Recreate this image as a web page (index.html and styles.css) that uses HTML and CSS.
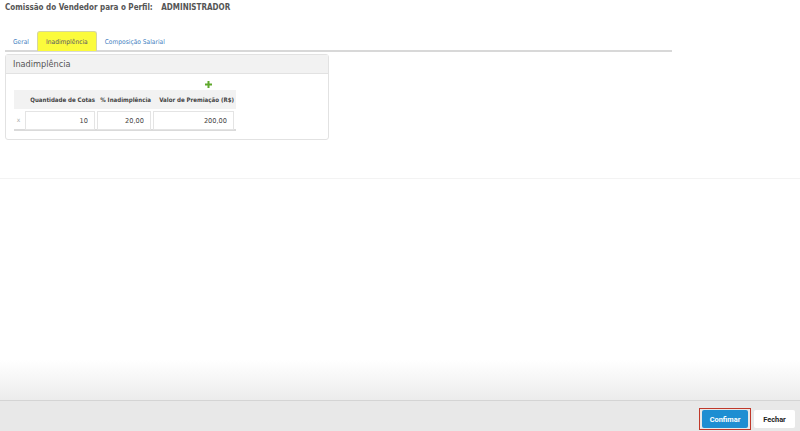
FILE: index.html
```html
<!DOCTYPE html>
<html lang="pt-BR">

<head>
    <meta charset="UTF-8">
    <meta name="viewport" content="width=device-width, initial-scale=1.0">
    <title>Comissão do Vendedor</title>
    <link rel="stylesheet" href="styles.css">
</head>

<body>
    <div class="page">
        <div class="content">
            <h1 class="title">Comissão do Vendedor para o Perfil: <span class="perfil">ADMINISTRADOR</span></h1>

            <!-- abas -->
            <div class="tabs">
                <a class="tab">Geral</a>
                <a class="tab active">Inadimplência</a>
                <a class="tab">Composição Salarial</a>
            </div>

            <!-- painel -->
            <div class="panel">
                <div class="panel-header">Inadimplência</div>
                <div class="panel-body">
                    <div class="grid">
                        <div class="add-row">
                            <svg class="plus" width="7" height="7" viewBox="0 0 7 7">
                                <path d="M2.5 0h2v2.5H7v2H4.5V7h-2V4.5H0v-2h2.5z" fill="#5fa82c" />
                            </svg>
                        </div>
                        <div class="grid-head">
                            <span class="cell remove-col"></span>
                            <span class="cell col-qtd">Quantidade de Cotas</span>
                            <span class="cell col-pct">% Inadimplência</span>
                            <span class="cell col-val">Valor de Premiação (R$)</span>
                        </div>
                        <div class="grid-row">
                            <span class="cell remove-col remove">x</span>
                            <span class="cell col-qtd"><input class="field" value="10"></span>
                            <span class="cell col-pct"><input class="field" value="20,00"></span>
                            <span class="cell col-val"><input class="field" value="200,00"></span>
                        </div>
                    </div>
                </div>
            </div>
        </div>

        <div class="spacer"></div>

        <!-- rodapé -->
        <div class="footer">
            <span class="btn-outline"><button class="btn btn-primary">Confimar</button></span>
            <button class="btn btn-default">Fechar</button>
        </div>
    </div>
</body>

</html>
```

FILE: styles.css
```css
body {
    margin: 0;
    font-family: "DejaVu Sans", Verdana, sans-serif;
    background: #fff;
    color: #444;
}

.page {
    height: 431px;
    display: flex;
    flex-direction: column;
}

.content {
    padding: 0 128px 0 5px;
    height: 178px;
    border-bottom: 1px solid #f3f3f3;
}

.title {
    margin: 0;
    padding-top: 3px;
    font-family: "DejaVu Sans Condensed", "DejaVu Sans", sans-serif;
    font-size: 8px;
    font-weight: bold;
    color: #555;
    height: 28px;
    white-space: nowrap;
}

.perfil {
    margin-left: 6px;
}

/* abas */
.tabs {
    display: flex;
    border-bottom: 2px solid #d8d8d8;
    height: 19px;
}

.tab {
    font-family: "DejaVu Sans Condensed", "DejaVu Sans", sans-serif;
    font-size: 6.6px;
    color: #3f7fbf;
    padding: 7px 8px 0;
    height: 12px;
    cursor: pointer;
    white-space: nowrap;
}

.tab.active {
    background: #fbfb3c;
    border: 1px solid #d6d6a0;
    border-bottom: none;
    border-radius: 3px 3px 0 0;
    color: #556;
    padding: 6px 8px 0;
    height: 13px;
}

/* painel */
.panel {
    margin-top: 2px;
    width: 322px;
    border: 1px solid #e2e2e2;
    border-radius: 3px;
}

.panel-header {
    background: #f2f2f2;
    border-bottom: 1px solid #e2e2e2;
    height: 18px;
    line-height: 18px;
    padding-left: 7px;
    font-size: 8.2px;
    color: #555;
}

.panel-body {
    padding: 4px 8px 8px 8px;
}

.grid {
    width: 222px;
}

.add-row {
    height: 12px;
    display: flex;
    justify-content: flex-end;
    align-items: center;
    padding-right: 24px;
}

.grid-head,
.grid-row {
    display: flex;
    gap: 2px;
}

.grid-head {
    background: #f2f2f2;
    height: 19px;
    align-items: center;
    font-family: "DejaVu Sans Condensed", "DejaVu Sans", sans-serif;
    font-weight: bold;
    font-size: 6.1px;
    color: #444;
    white-space: nowrap;
}

.grid-head .cell {
    text-align: right;
}

.grid-head .col-val {
    padding-right: 1px;
}

.grid-row {
    height: 20px;
    align-items: center;
    border-bottom: 2px solid #dadada;
}

.remove-col {
    width: 9px;
    flex: none;
}

.remove {
    font-size: 6px;
    color: #aaa;
    text-align: center;
}

.col-qtd {
    width: 70px;
    flex: none;
}

.col-pct {
    width: 54px;
    flex: none;
}

.col-val {
    width: 81px;
    flex: none;
}

.field {
    box-sizing: border-box;
    width: 100%;
    height: 19px;
    border: 1px solid #e4e4e4;
    font-family: "DejaVu Sans", sans-serif;
    font-size: 6.6px;
    color: #444;
    text-align: right;
    padding: 0 6px;
    margin: 0;
}

.spacer {
    flex: 1;
    background: linear-gradient(to bottom, #fff 0%, #fff 82%, #ececec 100%);
}

/* rodapé */
.footer {
    height: 30px;
    background: #e8e8e8;
    border-top: 1px solid #d4d4d4;
    display: flex;
    justify-content: flex-end;
    align-items: center;
    gap: 3px;
    padding: 0 5px 0 0;
}

.btn {
    font-family: "Roboto", "Liberation Sans", sans-serif;
    font-weight: bold;
    font-size: 7.4px;
    height: 18px;
    border: none;
    border-radius: 2px;
    cursor: pointer;
}

.btn-outline {
    display: inline-flex;
    padding: 1px 2px;
    border: 1px solid #c0392b;
    margin-top: 6px;
}

.btn-primary {
    background: #1e8ed2;
    color: #fff;
    width: 46px;
}

.btn-default {
    background: #fff;
    color: #222;
    width: 41px;
    margin-top: 6px;
}
```
